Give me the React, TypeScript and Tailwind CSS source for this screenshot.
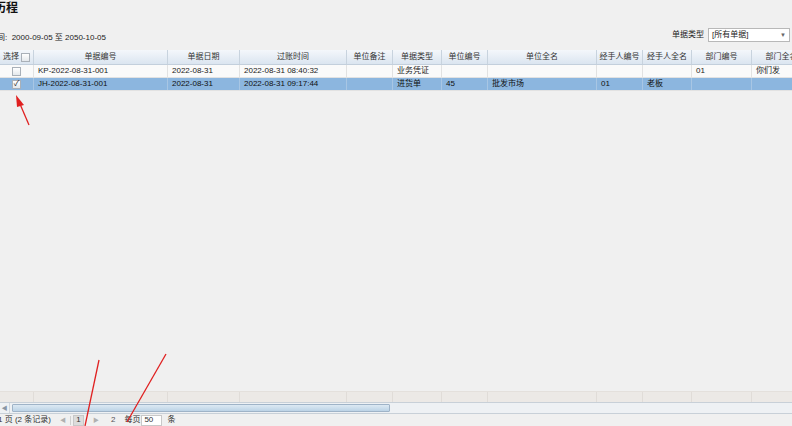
import React from "react";

const cols = [
  { t: "选择", w: 34 },
  { t: "单据编号", w: 134 },
  { t: "单据日期", w: 72 },
  { t: "过账时间", w: 107 },
  { t: "单位备注", w: 46 },
  { t: "单据类型", w: 49 },
  { t: "单位编号", w: 46 },
  { t: "单位全名", w: 109 },
  { t: "经手人编号", w: 46 },
  { t: "经手人全名", w: 49 },
  { t: "部门编号", w: 60 },
  { t: "部门全名", w: 60 },
];

const rows = [
  ["", "KP-2022-08-31-001", "2022-08-31", "2022-08-31 08:40:32", "", "业务凭证", "", "", "", "", "01", "你们发"],
  ["", "JH-2022-08-31-001", "2022-08-31", "2022-08-31 09:17:44", "", "进货单", "45", "批发市场", "01", "老板", "", ""],
];

function Check({ checked }: { checked?: boolean }) {
  return (
    <span className="inline-flex items-center justify-center w-[9px] h-[9px] border border-[#a9b0b8] bg-gradient-to-b from-[#ffffff] to-[#e4e8ec] text-[8px] leading-none text-[#222]">
      {checked ? "✓" : ""}
    </span>
  );
}

export default function App() {
  return (
    <div
      className="relative w-[792px] h-[426px] overflow-hidden bg-[#f0f0f0] text-[#222] flex flex-col"
      style={{ fontFamily: '"Liberation Sans", "Noto Sans CJK SC", sans-serif' }}
    >
      <div className="h-[24px] pl-0 pt-[1px] -ml-[6px] text-[12px] font-bold leading-[14px] text-[#111]">历程</div>
      <div className="h-[26px] flex items-center justify-between text-[8px]">
        <div className="-ml-[3px] pt-[1px]">间:&nbsp;&nbsp;2000-09-05 至 2050-10-05</div>
        <div className="flex items-center gap-[4px] pr-[2px] -mt-[4px]">
          <span>单据类型</span>
          <div className="w-[82px] h-[14px] border border-[#b8b8b8] bg-white flex items-center justify-between px-[3px]">
            <span>[所有单据]</span>
            <span className="text-[6px] text-[#666]">▼</span>
          </div>
        </div>
      </div>
      <div className="flex-1 flex flex-col overflow-hidden">
        <div className="flex h-[15px] bg-gradient-to-b from-[#f4f7fb] to-[#dbe5f0] border-b border-[#c3cfdc] text-[8px] text-[#333]">
          {cols.map((c, i) => (
            <div
              key={i}
              style={{ width: c.w, minWidth: c.w }}
              className="flex items-center justify-center gap-[2px] border-r border-[#c8d3de] whitespace-nowrap overflow-hidden"
            >
              <span>{c.t}</span>
              {i === 0 && <Check />}
            </div>
          ))}
        </div>
        {rows.map((r, ri) => (
          <div
            key={ri}
            className={`flex h-[13px] text-[8px] ${ri === 1 ? "bg-[#8cb6df] text-[#111]" : "bg-[#fafafa]"} border-b border-[#e2e2e2]`}
          >
            {r.map((v, ci) => (
              <div
                key={ci}
                style={{ width: cols[ci].w, minWidth: cols[ci].w }}
                className={`flex items-center ${ci === 0 ? "justify-center" : "pl-[4px]"} border-r ${ri === 1 ? "border-[#a8c6e4]" : "border-[#e2e2e2]"} whitespace-nowrap overflow-hidden`}
              >
                {ci === 0 ? <Check checked={ri === 1} /> : v}
              </div>
            ))}
          </div>
        ))}
        <div className="flex-1" />
        <div className="flex h-[11px] bg-[#ece9e6] border-t border-[#e4e0dc]">
          {cols.map((c, i) => (
            <div key={i} style={{ width: c.w, minWidth: c.w }} className="border-r border-[#e0dcd8]" />
          ))}
        </div>
        <div className="flex h-[12px] items-stretch bg-[#eef1f4] border-y border-[#c8d0d8]">
          <div className="w-[10px] flex items-center justify-center text-[6px] text-[#8a96a4] border-r border-[#d0d6dc]">◀</div>
          <div className="ml-[2px] w-[378px] my-[1px] rounded-[1px] border border-[#9fb3c7] bg-gradient-to-b from-[#dde9f3] to-[#bcd3e6]" />
        </div>
      </div>
      <div className="h-[12px] flex items-center text-[8px] text-[#333] whitespace-nowrap">
        <span className="-ml-[2px]">1 页 (2 条记录)</span>
        <span className="ml-[9px] text-[6px] text-[#b0b0b0]">◀</span>
        <span className="ml-[4px] w-px h-[9px] bg-[#d0d0d0]" />
        <span className="ml-[2px] w-[11px] h-[11px] border border-[#c8c8c8] bg-[#dcdcdc] flex items-center justify-center">1</span>
        <span className="ml-[9px] text-[6px] text-[#b0b0b0]">▶</span>
        <span className="ml-[12px] text-[#555]">2</span>
        <span className="ml-[9px]">每页</span>
        <span className="ml-[1px] w-[21px] h-[11px] border border-[#c8c8c8] bg-white pl-[2px] flex items-center">50</span>
        <span className="ml-[5px]">条</span>
      </div>
      <svg className="absolute inset-0 pointer-events-none" width="792" height="426">
        <g stroke="#e02020" strokeWidth="1.3" fill="#e02020">
          <line x1="29" y1="125" x2="20" y2="104" />
          <polygon points="16,95 24,105 17,107" stroke="none" />
          <line x1="99" y1="360" x2="85" y2="426" />
          <line x1="166" y1="354" x2="127" y2="422" />
        </g>
      </svg>
    </div>
  );
}
